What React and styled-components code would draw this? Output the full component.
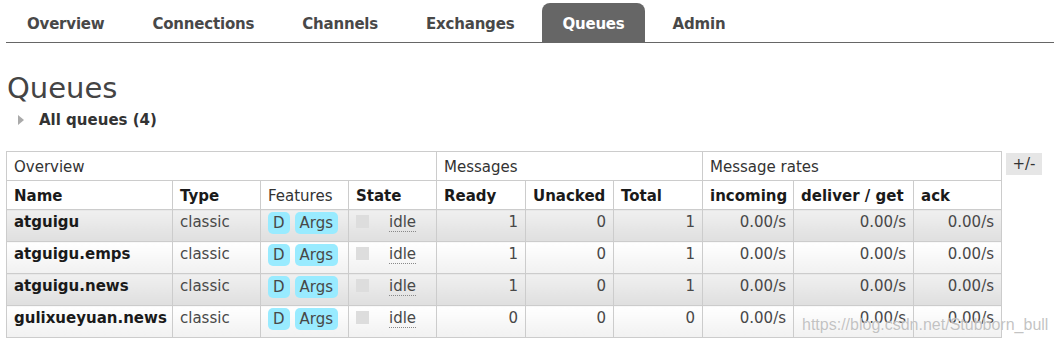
import React from 'react';
import styled, { createGlobalStyle } from 'styled-components';

const Global = createGlobalStyle`
  html, body { margin: 0; padding: 0; background: #fff; }
  body {
    font-family: "DejaVu Sans", Verdana, sans-serif;
    font-size: 15px;
    color: #484848;
  }
`;

const Page = styled.div`
  position: relative;
  width: 1054px;
  height: 344px;
  overflow: hidden;
  padding-left: 6px;
  box-sizing: border-box;
`;

const Nav = styled.nav`
  display: flex;
  gap: 8px;
  padding: 3px 0 0 1px;
  border-bottom: 1px solid #666;
`;

const Tab = styled.a`
  display: block;
  height: 39px;
  box-sizing: border-box;
  padding: 12px 20px 9px;
  line-height: 18px;
  font-weight: bold;
  letter-spacing: -0.2px;
  text-decoration: none;
  border-radius: 8px 8px 0 0;
  color: ${(p) => (p.$active ? '#fff' : '#484848')};
  background: ${(p) => (p.$active ? '#666' : 'transparent')};
`;

const Heading = styled.h1`
  margin: 28px 0 0 1px;
  font-size: 29px;
  line-height: 35px;
  font-weight: normal;
  color: #444;
`;

const Toggle = styled.div`
  display: flex;
  align-items: center;
  gap: 15px;
  margin-top: 5px;
  padding-left: 12px;
  line-height: 18px;
  font-weight: bold;
  color: #333;
`;

const Arrow = styled.span`
  width: 0;
  height: 0;
  border-left: 6px solid #aaa;
  border-top: 5px solid transparent;
  border-bottom: 5px solid transparent;
`;

const TableArea = styled.div`
  display: flex;
  align-items: flex-start;
  gap: 4px;
  margin-top: 22px;
`;

const Table = styled.table`
  border-collapse: collapse;
  table-layout: fixed;
  width: 995px;
`;

const Col = styled.col`
  width: ${(p) => p.$w}px;
`;

const GroupTh = styled.th`
  border: 1px solid #ccc;
  text-align: left;
  font-weight: normal;
  color: #333;
  padding: 6px 7px 4px;
  line-height: 18px;
  background: #fff;
`;

const ColTh = styled.th`
  border: 1px solid #ccc;
  text-align: left;
  font-weight: ${(p) => (p.$light ? 'normal' : 'bold')};
  color: ${(p) => (p.$light ? '#333' : '#1a1a1a')};
  padding: 6px 7px 4px;
  line-height: 18px;
  white-space: nowrap;
  background: #fff;
`;

const Td = styled.td`
  border: 1px solid #ccc;
  padding: 2px 7px 9px;
  line-height: 20px;
  vertical-align: top;
  white-space: nowrap;
  text-align: ${(p) => (p.$num ? 'right' : 'left')};
  font-weight: ${(p) => (p.$strong ? 'bold' : 'normal')};
  color: ${(p) => (p.$strong ? '#1a1a1a' : '#484848')};
  background: ${(p) =>
    p.$alt
      ? 'linear-gradient(#f0f0f0, #dfdfdf)'
      : 'linear-gradient(#ffffff, #f1f1f1)'};
`;

const Badge = styled.span`
  display: inline-block;
  vertical-align: top;
  height: 22px;
  line-height: 22px;
  margin: 0 5px -2px 0;
  padding: 0 5px;
  border-radius: 5px;
  background: #99ebff;
  color: #484848;
`;

const StateBox = styled.span`
  display: inline-block;
  vertical-align: top;
  width: 13px;
  height: 13px;
  margin-top: 3px;
  margin-right: 20px;
  background: #ddd;
`;

const Idle = styled.abbr`
  text-decoration: none;
  border-bottom: 1px dotted #888;
`;

const Toggler = styled.span`
  display: block;
  width: 36px;
  height: 22px;
  margin-top: 2px;
  line-height: 22px;
  text-align: center;
  background: #e6e6e6;
  color: #333;
`;

const Watermark = styled.div`
  position: absolute;
  left: 802px;
  top: 316px;
  font-family: "Liberation Sans", Arial, sans-serif;
  font-size: 16px;
  line-height: 18px;
  color: rgba(175, 175, 175, 0.75);
  text-shadow: 0 0 1px rgba(255, 255, 255, 0.9);
  pointer-events: none;
  white-space: nowrap;
`;

const tabs = ['Overview', 'Connections', 'Channels', 'Exchanges', 'Queues', 'Admin'];

const queues = [
  { name: 'atguigu', ready: 1, unacked: 0, total: 1 },
  { name: 'atguigu.emps', ready: 1, unacked: 0, total: 1 },
  { name: 'atguigu.news', ready: 1, unacked: 0, total: 1 },
  { name: 'gulixueyuan.news', ready: 0, unacked: 0, total: 0 },
];

const widths = [166, 88, 88, 88, 89, 88, 89, 91, 120, 88];

export default function App() {
  return (
    <>
      <Global />
      <Page>
        <Nav>
          {tabs.map((t) => (
            <Tab key={t} $active={t === 'Queues'}>
              {t}
            </Tab>
          ))}
        </Nav>
        <Heading>Queues</Heading>
        <Toggle>
          <Arrow />
          All queues (4)
        </Toggle>
        <TableArea>
          <Table>
            <colgroup>
              {widths.map((w, i) => (
                <Col key={i} $w={w} />
              ))}
            </colgroup>
            <thead>
              <tr>
                <GroupTh colSpan={4}>Overview</GroupTh>
                <GroupTh colSpan={3}>Messages</GroupTh>
                <GroupTh colSpan={3}>Message rates</GroupTh>
              </tr>
              <tr>
                <ColTh>Name</ColTh>
                <ColTh>Type</ColTh>
                <ColTh $light>Features</ColTh>
                <ColTh>State</ColTh>
                <ColTh>Ready</ColTh>
                <ColTh>Unacked</ColTh>
                <ColTh>Total</ColTh>
                <ColTh>incoming</ColTh>
                <ColTh>deliver / get</ColTh>
                <ColTh>ack</ColTh>
              </tr>
            </thead>
            <tbody>
              {queues.map((q, i) => {
                const alt = i % 2 === 0;
                return (
                  <tr key={q.name}>
                    <Td $alt={alt} $strong>{q.name}</Td>
                    <Td $alt={alt}>classic</Td>
                    <Td $alt={alt}>
                      <Badge>D</Badge>
                      <Badge>Args</Badge>
                    </Td>
                    <Td $alt={alt}>
                      <StateBox />
                      <Idle title="idle">idle</Idle>
                    </Td>
                    <Td $alt={alt} $num>{q.ready}</Td>
                    <Td $alt={alt} $num>{q.unacked}</Td>
                    <Td $alt={alt} $num>{q.total}</Td>
                    <Td $alt={alt} $num>0.00/s</Td>
                    <Td $alt={alt} $num>0.00/s</Td>
                    <Td $alt={alt} $num>0.00/s</Td>
                  </tr>
                );
              })}
            </tbody>
          </Table>
          <Toggler>+/-</Toggler>
        </TableArea>
        <Watermark>https://blog.csdn.net/Stubborn_bull</Watermark>
      </Page>
    </>
  );
}
